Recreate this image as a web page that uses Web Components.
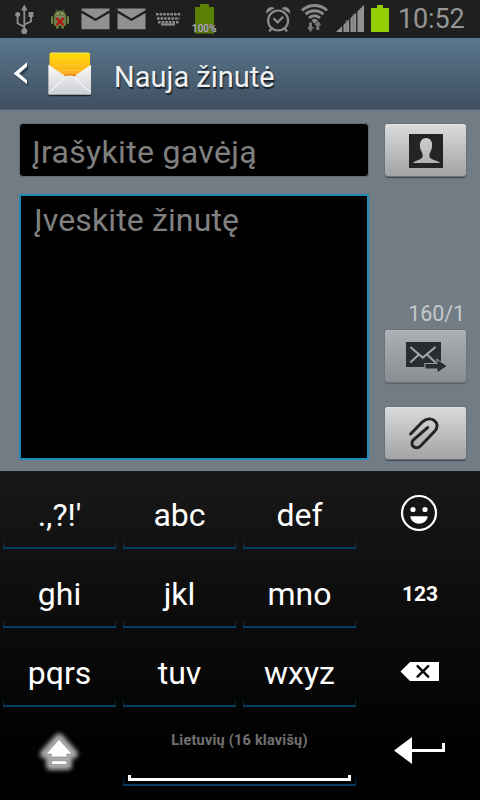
<!DOCTYPE html>
<html lang="lt">
<head>
<meta charset="utf-8">
<title>Nauja žinutė</title>
<style>
html,body{margin:0;padding:0;background:#000}
body{width:480px;height:800px;overflow:hidden;font-family:Roboto,"Noto Sans",sans-serif}
</style>
</head>
<body>
<message-app></message-app>
<script>
// Each entry: [viewBox, markup]; the drawn size equals the viewBox size.
const ICONS = {
  usb: ['14 3 20 32', `<g fill="none" stroke="#909090" stroke-width="1.8"><path d="M24.3 9V31M24.3 27L17.6 23.3V17M24.3 24.5L31 21.5V15"/></g><g fill="#909090"><path d="M24.3 4.5L27.6 10.5H21z"/><circle cx="17.7" cy="14.5" r="2.5"/><rect x="28.6" y="12" width="4.8" height="5"/><circle cx="24.3" cy="31.2" r="2.9"/></g>`],
  robot: ['50 8 20 22', `<g fill="#6b7d42"><path d="M54 16a6 5.5 0 0 1 12 0z"/><rect x="54" y="17" width="12" height="9" rx="1.3"/><rect x="51" y="16" width="2.3" height="8" rx="1.1"/><rect x="66.7" y="16" width="2.3" height="8" rx="1.1"/><rect x="56" y="23" width="2.8" height="5.8" rx="1.2"/><rect x="61.2" y="23" width="2.8" height="5.8" rx="1.2"/></g><path d="M56 9.5l1.5 2M64 9.5l-1.5 2" stroke="#6b7d42"/><path d="M54.6 16.5h11" stroke="#a1a69a" stroke-width=".8"/><g fill="#bbb"><circle cx="57.5" cy="13.6" r=".8"/><circle cx="62.6" cy="13.6" r=".8"/></g><path d="M56.3 18l7.4 7.3M63.7 18l-7.4 7.3" stroke="#b31414" stroke-width="2.3"/>`],
  mail: ['0 0 29 22', `<path d="M.5.5H28.5V2.2L14.5 10.4L.5 2.2z" fill="#909090"/><path d="M.5 5L14.5 13L28.5 5V21.2H.5z" fill="#909090"/>`],
  keyboard: ['156 12 25 14', `<path d="M156 14.3h24.5M157 18.4h22.5M158 22.3h20.5" stroke="#8a8a8a" stroke-width="2.5" stroke-dasharray="2.6 1"/><path d="M161 24.5h14" stroke="#8a8a8a" stroke-width="2.2"/>`],
  batteryUsb: ['190 2 29 33', `<path d="M195 7h5V4h9v3h5v26.5h-19z" fill="#5c8205"/><text x="204.2" y="32.4" text-anchor="middle" font-family="Roboto,sans-serif" font-size="10" font-weight="500" fill="#b5b5b5" stroke="#4b5540" stroke-width="1" paint-order="stroke">100%</text>`],
  alarm: ['265 5 27 28', `<g fill="none" stroke="#8b8b8b"><circle cx="278.1" cy="20.5" r="10" stroke-width="2.2"/><path d="M273.6 18.2l4 4.2 5.6-5.6" stroke-width="2.3"/><path d="M271.5 28.5l-2.3 3M284.7 28.5l2.3 3" stroke-width="2.3"/></g><g fill="#8b8b8b"><path d="M266 13.5c-.5-5 5-8.5 8.5-5.2z"/><path d="M290.2 13.5c.5-5-5-8.5-8.5-5.2z"/></g>`],
  wifi: ['301 4 28 29', `<g fill="none" stroke="#8b8b8b" stroke-width="2.9"><path d="M302 10.5a18 18 0 0 1 25 0M305.6 14.3a13 13 0 0 1 17.8 0M309 18a8 8 0 0 1 11 0"/></g><path d="M311.3 20.2a4.6 4.6 0 0 1 6.4 0l-3.2 3.5z" fill="#8b8b8b"/><path d="M309 22.5h3V27h2l-3.5 5L307 27h2z" fill="#777"/><path d="M316.3 30h3v-4.7h2L317.8 20.5 314.3 25.3h2z" fill="#777"/>`],
  signal: ['335 4 30 29', `<path d="M336 32L364 5V32z" fill="#919191"/><path d="M342.8 5V32M349.8 5V32M356.8 5V32" stroke="#202020" stroke-width="1.3"/><path d="M346.3 20v12M353.3 14v18" stroke="#777" stroke-width="1"/>`],
  battery: ['371 5 18 27', `<path d="M371 8h6V5h6v3h6v24h-18z" fill="#93ce04"/>`],
  back: ['12 61 18 28', `<path d="M27.3 64.8v4.8l-7 5.8 7 6.3v4.5L14 75.5z" fill="#20303f" opacity=".7" transform="translate(1 1)"/><path d="M27 63.3v4.1l-7.8 7 7.8 6.8v4L13.5 74.4z" fill="#fff"/>`],
  app: ['47 51 46 47', `<defs><linearGradient id="y" x2="0" y2="1"><stop stop-color="#ffdc05"/><stop offset=".6" stop-color="#ffa923"/></linearGradient><linearGradient id="w" x2="0" y2="1"><stop stop-color="#fafafa"/><stop offset="1" stop-color="#ccced2"/></linearGradient></defs><path d="M48.5 67V94.3q0 1.2 1.2 1.2H90q1 0 1-1.2V67z" fill="#1d2731" transform="translate(0 .8)"/><rect x="49.5" y="52.7" width="40.5" height="38" rx="1.5" fill="url(#y)"/><path d="M51 53.1H88.5" stroke="#ffe98c" stroke-width=".8"/><path d="M56 59.4h28M56 65h28M56 70.5h28" stroke="#ffd75c" stroke-width=".8" opacity=".6"/><path d="M48.3 64.7L64.5 75.6q5.3 2 10.6 0L91 64.7V93.7q0 1-1 1H49.3q-1 0-1-1z" fill="url(#w)"/><path d="M64 75.3q6-2 12 0l-1.5 1.3q-4.500-1.300-9 0z" fill="#c97b18"/><path d="M49 92.5L66 76.5q3.600-1.500 7.200 0L90.400 92.500" fill="none" stroke="#fff" stroke-width="1"/>`],
  contact: ['409 134 34 34', `<path fill-rule="evenodd" fill="#242424" d="M409 134h34v34h-34zM413 163h27c-1-1.8-7.800-3-10-5.200-.9-1-.7-3.800.2-5.500 3.200-5.200 3-14.300-4.100-14.300s-7.500 9.100-4.200 14.300c.9 1.700 1.100 4.500.2 5.500-2.100 2.200-8.100 3.400-9.100 5.200z"/>`],
  send: ['405 341 43 33', `<path d="M406 342h35v25h-35z" fill="#292d30"/><path d="M410.3 347l12.5 10.6L435.5 347M410.3 362.5l8-7.5M435.5 362.5l-8-7.5" fill="none" stroke="#a3a7ab" stroke-width="2"/><path d="M424.400 363h12v-4.800l10.800 7.900-10.800 7.400v-4.300h-12z" fill="#9b9fa3"/><path d="M425.400 363.900h12v-4l9.200 6.200-9.200 6.200v-3.800h-12z" fill="#292d30"/>`],
  clip: ['407 415 34 36', `<path d="M410.600 434L422.500 421.800C430.500 414.500 441.300 422.500 435.300 430.500L420.800 445.700C416 450.500 409 445.500 413.200 440L427.600 427.600" fill="none" stroke="#252525" stroke-width="3" stroke-linecap="round"/>`],
  smile: ['400 494 38 38', `<circle cx="419" cy="513" r="17" fill="none" stroke="#fff" stroke-width="2.2"/><circle cx="413" cy="509.5" r="2.6" fill="#fff"/><circle cx="425" cy="509.5" r="2.6" fill="#fff"/><path d="M410.3 516.3h17.4c-1 9.8-16.4 9.8-17.4 0z" fill="#fff"/>`],
  del: ['400 661 40 21', `<path d="M400.5 671.5l9.500-9.500h29v19h-29z" fill="#fff"/><path d="M417.600 666.200l10.600 10.500M428.200 666.200l-10.600 10.500" stroke="#080808" stroke-width="2.500" stroke-linecap="round"/>`],
  enter: ['393 736 53 30', `<path d="M394 750.5L412 737v11.900h30V743h3v8.900h-33V764z" fill="#fff"/>`],
  shift: ['32 722 55 60', `<defs><filter id="b" x="-50%" y="-50%" width="200%" height="200%"><feGaussianBlur stdDeviation="2"/></filter></defs><path d="M59 738L73.5 754H67.5V765.5H50.5V754H44.5z" fill="#aaa" stroke="#aaa" stroke-width="9" stroke-linejoin="round" filter="url(#b)"/><path d="M59 739.300L72.200 754H67v3H51.200v-3H46zM51.500 760.700h15.300v3.800H51.500z" fill="#fff" stroke="#888" stroke-width=".7"/>`]
};
function define(name, css, html) {
  const t = document.createElement('template');
  t.innerHTML = `<style>${css}</style>${html}`;
  customElements.define(name, class extends HTMLElement {
    constructor() {
      super();
      this.attachShadow({mode: 'open'}).append(t.content.cloneNode(true));
    }
  });
}
customElements.define('ui-icon', class extends HTMLElement {
  connectedCallback() {
    const [box, art] = ICONS[this.getAttribute('name')];
    const [, , w, h] = box.split(' ');
    const root = this.shadowRoot || this.attachShadow({mode: 'open'});
    root.innerHTML = `<style>:host{display:block;flex:none}svg{display:block}</style><svg width="${w}" height="${h}" viewBox="${box}">${art}</svg>`;
  }
});
define('status-bar', `:host{display:flex;height:38px;background:#1f1f1f;box-sizing:border-box;align-items:flex-start;padding-left:14px}
  .time{font-size:27px;line-height:38px;color:#969696;margin-left:9px;letter-spacing:-.15px}`,
  `<ui-icon name="usb" style="margin-top:3px"></ui-icon>
  <ui-icon name="robot" style="margin:8px 0 0 16px"></ui-icon>
  <ui-icon name="mail" style="margin:8px 0 0 11px"></ui-icon>
  <ui-icon name="mail" style="margin:8px 0 0 7px"></ui-icon>
  <ui-icon name="keyboard" style="margin:12px 0 0 10px"></ui-icon>
  <ui-icon name="batteryUsb" style="margin:2px 0 0 9px"></ui-icon>
  <ui-icon name="alarm" style="margin:5px 0 0 46px"></ui-icon>
  <ui-icon name="wifi" style="margin:4px 0 0 9px"></ui-icon>
  <ui-icon name="signal" style="margin:4px 0 0 6px"></ui-icon>
  <ui-icon name="battery" style="margin:5px 0 0 6px"></ui-icon>
  <span class="time">10:52</span>`);
define('title-bar', `:host{display:flex;height:72px;box-sizing:border-box;align-items:center;padding-left:12px;background:linear-gradient(#5b778e,#3f4f60);border-bottom:1px solid #52647a}
  .t{margin-left:21px;font-size:29px;line-height:36px;padding-top:6px;color:#f0f0f0;text-shadow:1px 2px 1px #17212b}`,
  `<ui-icon name="back"></ui-icon><ui-icon name="app" style="margin:2px 0 0 17px"></ui-icon><span class="t"><slot></slot></span>`);
define('text-field', `:host{display:block;box-sizing:border-box;background:#000;color:#808080;font-size:32px;line-height:38px;border-radius:4px;white-space:nowrap;padding:9px 0 0 12px;height:54px;border:1px solid #5f6b76;letter-spacing:.32px}
  :host([focused]){height:266px;border:2px solid #1e8bb9;border-radius:2px;padding:5px 0 0 13px;letter-spacing:.12px}`, `<slot></slot>`);
define('push-button', `:host{display:flex;align-items:center;justify-content:center;box-sizing:border-box;width:81px;height:52px;border-radius:3px;background:linear-gradient(#dadbdc,#a2a3a5);box-shadow:0 0 0 1px #69727a,0 2px 1px #3f474e,inset 0 1px #e3e4e5}
  :host([disabled]){background:linear-gradient(#adb1b5,#898d92);box-shadow:0 0 0 1px #69737c,0 1.5px 1px #566068,inset 0 1px #b7bbbe}`, `<slot></slot>`);
define('compose-pane', `:host{display:grid;grid-template-columns:350px 84px;column-gap:15px;height:361px;box-sizing:border-box;padding:13px 0 0 19px;background:#727c85}
  .l{display:flex;flex-direction:column;gap:17px}
  .r{display:flex;flex-direction:column;align-items:flex-start;padding:1px 0 0 1px}
  .n{font-size:21.5px;line-height:24px;color:#c5c8cb;margin:126px 0 4px;align-self:flex-end;padding-right:3px;letter-spacing:-.1px}`,
  `<div class="l"><text-field>Įrašykite gavėją</text-field><text-field focused>Įveskite žinutę</text-field></div>
  <div class="r"><push-button><ui-icon name="contact" style="margin:2px 0 0 1px"></ui-icon></push-button><span class="n">160/1</span>
  <push-button disabled><ui-icon name="send" style="margin:3px 0 0 2px"></ui-icon></push-button>
  <push-button style="margin-top:25px"><ui-icon name="clip" style="margin-right:3px"></ui-icon></push-button></div>`);
define('letter-key', `:host{display:flex;box-sizing:border-box;justify-content:center;align-items:flex-end;color:#fff;font-size:32px;line-height:38px;padding-bottom:15px;background:linear-gradient(#043d61,#043d61) bottom/100% 2px no-repeat,linear-gradient(#043d6155,#043d61) 0 100%/1px 8px no-repeat,linear-gradient(#043d6155,#043d61) 100% 100%/1px 8px no-repeat}`, `<slot></slot>`);
define('space-key', `:host{display:flex;flex-direction:column;align-items:center;justify-content:flex-end;grid-column:2/4;box-sizing:border-box;padding:0 5px 5px;color:#717171;font-size:14.5px;letter-spacing:.22px;font-weight:700;line-height:18px;background:linear-gradient(#043d61,#043d61) bottom/100% 2px no-repeat,linear-gradient(#043d6155,#043d61) 0 100%/1px 8px no-repeat,linear-gradient(#043d6155,#043d61) 100% 100%/1px 8px no-repeat}
  i{display:block;width:223px;height:6px;margin-top:25px;box-sizing:border-box;border:3px solid #fff;border-top:0}`, `<slot></slot><i></i>`);
define('key-pad', `:host{display:grid;height:329px;box-sizing:border-box;grid-template-columns:113px 113px 113px 124px;grid-template-rows:78px 79px 79px 79px;column-gap:7px;padding-left:3px;background:linear-gradient(#181818,#000 88%)}
  .c{display:flex;align-items:center;justify-content:center;box-sizing:border-box;color:#fff}
  .num{font-weight:700;font-size:21px;line-height:26px;padding-top:11px;padding-right:10px}`,
  `<letter-key>.,?!'</letter-key><letter-key>abc</letter-key><letter-key>def</letter-key><div class="c" style="padding:6px 12px 0 0"><ui-icon name="smile"></ui-icon></div>
  <letter-key>ghi</letter-key><letter-key>jkl</letter-key><letter-key>mno</letter-key><div class="c num">123</div>
  <letter-key>pqrs</letter-key><letter-key>tuv</letter-key><letter-key>wxyz</letter-key><div class="c" style="padding:8px 10px 0 0"><ui-icon name="del"></ui-icon></div>
  <div class="c" style="padding-top:10px"><ui-icon name="shift"></ui-icon></div><space-key>Lietuvių (16 klavišų)</space-key><div class="c" style="padding:9px 11px 0 0"><ui-icon name="enter"></ui-icon></div>`);
define('message-app', `:host{display:flex;flex-direction:column;width:480px;height:800px;overflow:hidden}`,
  `<status-bar></status-bar><title-bar>Nauja žinutė</title-bar><compose-pane></compose-pane><key-pad></key-pad>`);
</script>
</body>
</html>
